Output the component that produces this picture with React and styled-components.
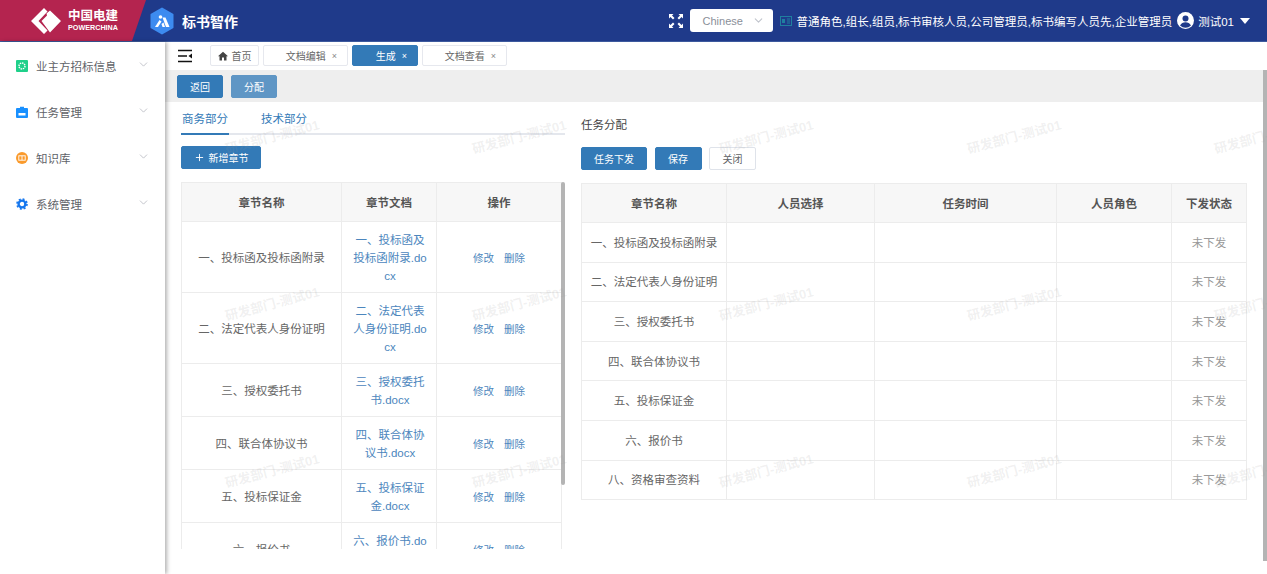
import React from 'react'
import styled, { createGlobalStyle } from 'styled-components'
import { ChevronDown, Plus } from 'lucide-react'

const GlobalStyle = createGlobalStyle`
  html, body { margin: 0; padding: 0; height: 100%; overflow: hidden; background: #fff; }
  body { font-family: "Liberation Sans", "Noto Sans CJK SC", sans-serif; color: #606266; }
  * { box-sizing: border-box; }
`

const Page = styled.div`
  position: relative;
  width: 1267px;
  height: 574px;
  overflow: hidden;
  display: flex;
  flex-direction: column;
`

const Header = styled.header`
  height: 42px;
  flex: none;
  display: flex;
  align-items: center;
  background: #1f3a8a;
  border-bottom: 1px solid #3d5a9e;
  color: #fff;
`

const BrandRed = styled.div`
  width: 146px;
  height: 41px;
  flex: none;
  display: flex;
  align-items: center;
  padding-left: 30px;
  gap: 6px;
  background: #b4244f;
  clip-path: polygon(0 0, 100% 0, 132px 100%, 0 100%);
`

const BrandText = styled.div`
  display: flex;
  flex-direction: column;
  align-items: center;
  line-height: 1;
`

const BrandCn = styled.span`
  font-size: 12.5px;
  font-weight: 700;
`

const BrandEn = styled.span`
  font-size: 7.2px;
  font-weight: 700;
  margin-top: 2px;
`

const AppTitle = styled.div`
  display: flex;
  align-items: center;
  gap: 7px;
  margin-left: 3px;
  font-size: 14px;
  font-weight: 700;
`

const HeaderRight = styled.div`
  margin-left: auto;
  display: flex;
  align-items: center;
  padding-right: 17px;
  font-size: 11.5px;
`

const LangSelect = styled.div`
  width: 83px;
  height: 23px;
  margin-left: 6px;
  background: #fff;
  border-radius: 3px;
  color: #8a8f99;
  font-size: 11px;
  display: flex;
  align-items: center;
  justify-content: space-between;
  padding: 0 8px 0 13px;
`

const Roles = styled.span`
  margin-left: 5px;
  white-space: nowrap;
`

const UserName = styled.span`
  margin-left: 4px;
`

const Caret = styled.span`
  width: 0;
  height: 0;
  margin-left: 6px;
  border-left: 5.5px solid transparent;
  border-right: 5.5px solid transparent;
  border-top: 6px solid #fff;
`

const Body = styled.div`
  flex: 1;
  display: flex;
  min-height: 0;
`

const Sidebar = styled.aside`
  width: 165px;
  flex: none;
  padding-top: 1px;
  background: #fff;
  box-shadow: 2px 0 4px rgba(0, 0, 0, 0.3);
  z-index: 2;
`

const MenuItem = styled.div`
  height: 46px;
  display: flex;
  align-items: center;
  padding: 0 15px 0 16px;
  font-size: 11.5px;
  color: #5f6368;
`

const MenuIcon = styled.span`
  width: 12px;
  height: 12px;
  margin-right: 8px;
  display: flex;
`

const MenuLabel = styled.span`
  flex: 1;
`

const MenuChevron = styled(ChevronDown)`
  margin-top: -4px;
`

const Main = styled.main`
  position: relative;
  flex: 1;
  min-width: 0;
  display: flex;
  flex-direction: column;
`

const TabBar = styled.div`
  height: 27px;
  flex: none;
  display: flex;
  align-items: center;
  padding-left: 13px;
  gap: 4px;
`

const Tab = styled.div`
  height: 21px;
  display: flex;
  align-items: center;
  justify-content: ${p => (p.$home ? 'center' : 'flex-end')};
  gap: ${p => (p.$home ? '4px' : '6px')};
  width: ${p => p.$w}px;
  padding-right: ${p => (p.$home ? 0 : 10)}px;
  border: 1px solid ${p => (p.$active ? '#337ab7' : '#e6e8ee')};
  border-radius: 2px;
  background: ${p => (p.$active ? '#337ab7' : '#fff')};
  color: ${p => (p.$active ? '#fff' : '#666')};
  font-size: 10px;
`

const TabClose = styled.span`
  font-size: 9px;
  color: ${p => (p.$active ? '#fff' : '#888')};
`

const Toggle = styled.span`
  width: 15px;
  height: 14px;
  margin-right: 13px;
  display: flex;
`

const ActionBar = styled.div`
  height: 32px;
  flex: none;
  margin: 1px 4px 0 0;
  display: flex;
  align-items: center;
  gap: 8px;
  padding-left: 12px;
  background: #eeeeee;
`

const Btn = styled.button`
  height: 23px;
  width: ${p => p.$w}px;
  padding: 0;
  display: inline-flex;
  align-items: center;
  justify-content: center;
  gap: 4px;
  border-radius: 2px;
  border: 1px solid ${p => (p.$plain ? '#dfe3ea' : p.$light ? '#5f96c5' : '#337ab7')};
  background: ${p => (p.$plain ? '#fff' : p.$light ? '#5f96c5' : '#337ab7')};
  color: ${p => (p.$plain ? '#606266' : '#fff')};
  font-family: inherit;
  font-size: 10px;
`

const Content = styled.div`
  flex: 1;
  min-height: 0;
  display: flex;
  padding-left: 16px;
`

const LeftPane = styled.section`
  width: 384px;
  flex: none;
  height: 447px;
  display: flex;
  flex-direction: column;
`

const RightPane = styled.section`
  flex: 1;
  margin-left: 16px;
  display: flex;
  flex-direction: column;
`

const Tabs = styled.div`
  height: 33px;
  flex: none;
  display: flex;
  gap: 31px;
  border-bottom: 2px solid #e4e7ed;
`

const PaneTab = styled.div`
  height: 33px;
  padding: 8px 1px 0;
  font-size: 11.5px;
  color: #337ab7;
  border-bottom: ${p => (p.$active ? '2px solid #337ab7' : 'none')};
`

const AddRow = styled.div`
  flex: none;
  padding-top: 11px;
  height: 47px;
`

const ScrollArea = styled.div`
  position: relative;
  flex: 1;
  min-height: 0;
  overflow: hidden;
`

const ScrollThumb = styled.div`
  position: absolute;
  right: 0;
  top: 0;
  width: 4px;
  height: 303px;
  border-radius: 2px;
  background: #b4b4b4;
`

const PageThumb = styled.div`
  position: absolute;
  right: 0;
  top: 28px;
  width: 4px;
  height: 491px;
  background: #b4b4b4;
`

const Table = styled.table`
  width: ${p => p.$w}px;
  table-layout: fixed;
  border-collapse: collapse;
  font-size: 11.5px;
`

const Th = styled.th`
  height: 39px;
  width: ${p => p.$w}px;
  padding: 0;
  background: #f7f7f7;
  border: 1px solid #ececec;
  color: #555;
  font-size: 11.5px;
  font-weight: 700;
  text-align: center;
`

const Td = styled.td`
  height: ${p => p.$h}px;
  padding: 1px 0 0;
  border: 1px solid #ececec;
  color: ${p => (p.$muted ? '#999' : '#666')};
  text-align: center;
  line-height: 18px;
  word-break: break-all;
`

const DocTd = styled(Td)`
  padding: 1px 9px 0 11px;
`

const DocLink = styled.span`
  color: #4c86bd;
`

const OpLink = styled.span`
  color: #4c86bd;
  font-size: 10.5px;
  margin: 0 5px;
`

const AssignTitle = styled.div`
  flex: none;
  height: 45px;
  padding-top: 14px;
  font-size: 11.5px;
  color: #444;
`

const AssignButtons = styled.div`
  flex: none;
  height: 36px;
  display: flex;
  gap: 7.5px;
`

const Watermark = styled.div`
  position: absolute;
  left: ${p => p.$x}px;
  top: ${p => p.$y}px;
  transform: translate(-50%, -50%) rotate(-15deg);
  font-size: 13px;
  font-weight: 700;
  color: rgba(150, 150, 150, 0.14);
  white-space: nowrap;
  pointer-events: none;
  z-index: 1;
`

const marks = []
;[136, 303, 470].forEach(y => {
  ;[272, 519, 766, 1014, 1261].forEach(x => marks.push({ x, y }))
})

const leftRows = [
  { name: '一、投标函及投标函附录', doc: '一、投标函及投标函附录.docx', h: 71 },
  { name: '二、法定代表人身份证明', doc: '二、法定代表人身份证明.docx', h: 71 },
  { name: '三、授权委托书', doc: '三、授权委托书.docx', h: 53 },
  { name: '四、联合体协议书', doc: '四、联合体协议书.docx', h: 53 },
  { name: '五、投标保证金', doc: '五、投标保证金.docx', h: 53 },
  { name: '六、报价书', doc: '六、报价书.docx', h: 53 },
]

const rightRows = [
  '一、投标函及投标函附录',
  '二、法定代表人身份证明',
  '三、授权委托书',
  '四、联合体协议书',
  '五、投标保证金',
  '六、报价书',
  '八、资格审查资料',
]

// chevron on the left, diamond on the right, split by a white-less gap
const LogoMark = () => (
  <svg width="32" height="28" viewBox="0 0 32 28">
    <path d="M14 1 L1 14 L14 27 L17.5 23.5 L8.5 14 L17.5 4.5Z" fill="#fff" />
    <path d="M20 3.5 L31 14 L20 25.5 L11.5 14 L17 8.5 L16.5 6.5Z" fill="#fff" />
  </svg>
)

const AppMark = () => (
  <svg width="26" height="28" viewBox="0 0 26 28">
    <path d="M13 1.5 L23.5 7.5 V20.5 L13 26.5 L2.5 20.500 V7.5Z" fill="#3d8bf0" stroke="#3d8bf0" strokeWidth="2" strokeLinejoin="round" />
    <path d="M6 20 L10.5 13 L12.5 14.5 L9 20Z" fill="#fff" />
    <path d="M13.5 10.5 L16.5 10.5 L20.5 20 L17 20Z" fill="#fff" />
    <path d="M12.5 17 L14.5 15.5 L16 20 H13.500Z" fill="#fff" />
    <circle cx="11.5" cy="10" r="1.8" fill="#fff" />
  </svg>
)

const ExpandIcon = () => (
  <svg width="16" height="16" viewBox="0 0 16 16" style={{ flex: 'none' }}>
    <path d="M1 1h4.5L4 2.5l2.500 2.500-1.500 1.500L2.500 4 1 5.500z" fill="#fff" />
    <path d="M15 1h-4.500L12 2.500 9.500 5l1.500 1.500L13.500 4 15 5.500z" fill="#fff" />
    <path d="M1 15h4.500L4 13.500l2.500-2.500-1.500-1.500L2.500 12 1 10.500z" fill="#fff" />
    <path d="M15 15h-4.500l1.500-1.500L9.500 11l1.500-1.500 2.500 2.500 1.500-1.500z" fill="#fff" />
  </svg>
)

const IdIcon = () => (
  <svg width="12" height="12" viewBox="0 0 12 12" style={{ marginLeft: 7, flex: 'none' }}>
    <rect x="0.5" y="1.5" width="11" height="9" fill="none" stroke="#1f7f9f" />
    <rect x="2" y="4" width="3" height="4" fill="#1f7f9f" />
    <path d="M7 4h3M7 6h3M7 8h3" stroke="#1f7f9f" />
  </svg>
)

const UserIcon = () => (
  <svg width="17" height="17" viewBox="0 0 17 17" style={{ marginLeft: 5, flex: 'none' }}>
    <circle cx="8.5" cy="8.5" r="8.5" fill="#fff" />
    <circle cx="8.5" cy="6.5" r="3" fill="#1f3a8a" />
    <path d="M3 13.5c1.2-2.4 3.2-3.2 5.5-3.2s4.3.8 5.5 3.2a8 8 0 0 1-11 0z" fill="#1f3a8a" />
  </svg>
)

const HomeIcon = () => (
  <svg width="10" height="10" viewBox="0 0 10 10">
    <path d="M5 .8 L10 5.3 H8.5 V9.5 H6 V6.5 H4 V9.5 H1.5 V5.3 H0Z" fill="#444" />
  </svg>
)

const MenuToggleIcon = () => (
  <svg width="15" height="14" viewBox="0 0 15 14">
    <path d="M0 1.5h14M0 7h9M0 12.5h14" stroke="#111" strokeWidth="1.6" />
    <path d="M14 4.5v5l-3.5-2.5z" fill="#111" />
  </svg>
)

const GreenIcon = () => (
  <svg width="12" height="12" viewBox="0 0 12 12">
    <rect width="12" height="12" rx="1" fill="#1fd08a" />
    <circle cx="6" cy="6" r="3" fill="none" stroke="#fff" strokeWidth="1.4" strokeDasharray="1.5 .8" />
  </svg>
)

const BlueCaseIcon = () => (
  <svg width="12" height="12" viewBox="0 0 12 12">
    <path d="M4 2V.8h4V2h3a1 1 0 0 1 1 1v8a1 1 0 0 1-1 1H1a1 1 0 0 1-1-1V3a1 1 0 0 1 1-1z" fill="#1890ff" />
    <rect x="2.5" y="7" width="7" height="2.5" fill="#fff" />
  </svg>
)

const BookIcon = () => (
  <svg width="12" height="12" viewBox="0 0 12 12">
    <circle cx="6" cy="6" r="6" fill="#fa9a2c" />
    <rect x="2.8" y="3.8" width="6.4" height="4.4" fill="none" stroke="#fff" strokeWidth=".9" />
    <path d="M6 3.8v4.4" stroke="#fff" strokeWidth=".9" />
  </svg>
)

const GearIcon = () => (
  <svg width="12" height="12" viewBox="0 0 12 12">
    <circle cx="6" cy="6" r="3.4" fill="none" stroke="#1677ee" strokeWidth="2.4" />
    <circle cx="6" cy="6" r="5" fill="none" stroke="#1677ee" strokeWidth="1.6" strokeDasharray="2 1.93" />
  </svg>
)

const menu = [
  { label: '业主方招标信息', icon: <GreenIcon /> },
  { label: '任务管理', icon: <BlueCaseIcon /> },
  { label: '知识库', icon: <BookIcon /> },
  { label: '系统管理', icon: <GearIcon /> },
]

export default function App() {
  return (
    <Page>
      <GlobalStyle />
      <Header>
        <BrandRed>
          <LogoMark />
          <BrandText>
            <BrandCn>中国电建</BrandCn>
            <BrandEn>POWERCHINA</BrandEn>
          </BrandText>
        </BrandRed>
        <AppTitle>
          <AppMark />
          标书智作
        </AppTitle>
        <HeaderRight>
          <ExpandIcon />
          <LangSelect>
            Chinese
            <ChevronDown size={13} color="#c0c4cc" />
          </LangSelect>
          <IdIcon />
          <Roles>普通角色,组长,组员,标书审核人员,公司管理员,标书编写人员先,企业管理员</Roles>
          <UserIcon />
          <UserName>测试01</UserName>
          <Caret />
        </HeaderRight>
      </Header>
      <Body>
        <Sidebar>
          {menu.map(m => (
            <MenuItem key={m.label}>
              <MenuIcon>{m.icon}</MenuIcon>
              <MenuLabel>{m.label}</MenuLabel>
              <MenuChevron size={13} strokeWidth={1.5} color="#b5b8bf" />
            </MenuItem>
          ))}
        </Sidebar>
        <Main>
          <TabBar>
            <Toggle><MenuToggleIcon /></Toggle>
            <Tab $home $w={49}>
              <HomeIcon />
              首页
            </Tab>
            <Tab $w={85}>文档编辑<TabClose>×</TabClose></Tab>
            <Tab $w={66} $active>生成<TabClose $active>×</TabClose></Tab>
            <Tab $w={85}>文档查看<TabClose>×</TabClose></Tab>
          </TabBar>
          <ActionBar>
            <Btn $w={46}>返回</Btn>
            <Btn $w={46} $light>分配</Btn>
          </ActionBar>
          <Content>
            <LeftPane>
              <Tabs>
                <PaneTab $active>商务部分</PaneTab>
                <PaneTab>技术部分</PaneTab>
              </Tabs>
              <AddRow>
                <Btn $w={80}><Plus size={11} />新增章节</Btn>
              </AddRow>
              <ScrollArea>
                <Table $w={380}>
                  <thead>
                    <tr>
                      <Th $w={160}>章节名称</Th>
                      <Th $w={95}>章节文档</Th>
                      <Th $w={125}>操作</Th>
                    </tr>
                  </thead>
                  <tbody>
                    {leftRows.map(r => (
                      <tr key={r.name}>
                        <Td $h={r.h}>{r.name}</Td>
                        <DocTd $h={r.h}><DocLink>{r.doc}</DocLink></DocTd>
                        <Td $h={r.h}><OpLink>修改</OpLink><OpLink>删除</OpLink></Td>
                      </tr>
                    ))}
                  </tbody>
                </Table>
                <ScrollThumb />
              </ScrollArea>
            </LeftPane>
            <RightPane>
              <AssignTitle>任务分配</AssignTitle>
              <AssignButtons>
                <Btn $w={66}>任务下发</Btn>
                <Btn $w={47}>保存</Btn>
                <Btn $w={47} $plain>关闭</Btn>
              </AssignButtons>
              <Table $w={665}>
                <thead>
                  <tr>
                    <Th $w={145}>章节名称</Th>
                    <Th $w={148}>人员选择</Th>
                    <Th $w={182}>任务时间</Th>
                    <Th $w={115}>人员角色</Th>
                    <Th $w={75}>下发状态</Th>
                  </tr>
                </thead>
                <tbody>
                  {rightRows.map(name => (
                    <tr key={name}>
                      <Td $h={39.6}>{name}</Td>
                      <Td $h={39.6} />
                      <Td $h={39.6} />
                      <Td $h={39.6} />
                      <Td $h={39.6} $muted>未下发</Td>
                    </tr>
                  ))}
                </tbody>
              </Table>
            </RightPane>
          </Content>
          <PageThumb />
        </Main>
      </Body>
      {marks.map(m => (
        <Watermark key={`${m.x}-${m.y}`} $x={m.x} $y={m.y}>研发部门-测试01</Watermark>
      ))}
    </Page>
  )
}
